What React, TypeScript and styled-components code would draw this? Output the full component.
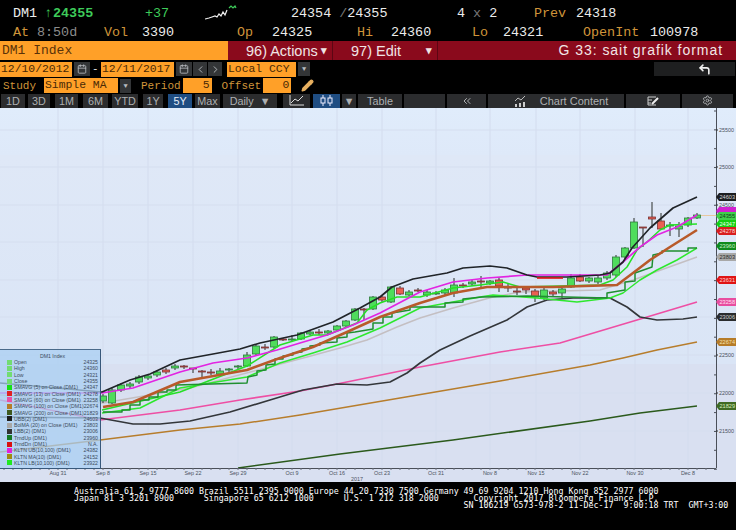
import React from "react";
import styled, { createGlobalStyle } from "styled-components";
import { Calendar, ChevronLeft, ChevronRight, ChevronsLeft, CornerUpLeft, Pencil, Settings } from "lucide-react";

const GlobalStyle = createGlobalStyle`
  html, body {
    margin: 0;
    padding: 0;
    background: #000;
  }
`;

const MONO = `"Liberation Mono", "DejaVu Sans Mono", monospace`;

const StyledRoot = styled.div`
  width: 736px;
  height: 530px;
  overflow: hidden;
  background: #000;
  font-family: ${MONO};
`;

const StyledQuoteRow = styled.div<{ $h: number; $top: number }>`
  display: flex;
  align-items: center;
  box-sizing: border-box;
  height: ${(p) => p.$h}px;
  padding-left: 13px;
  padding-top: ${(p) => p.$top}px;
  font-size: 13.4px;
  white-space: pre;
`;

const StyledField = styled.span<{ $w: number; $color?: string; $bold?: boolean }>`
  display: flex;
  align-items: center;
  flex: 0 0 ${(p) => p.$w}px;
  color: ${(p) => p.$color ?? "#ececec"};
  font-weight: ${(p) => (p.$bold ? 700 : 400)};
`;

const StyledMuted = styled.span`
  color: #777;
`;

const StyledArrow = styled.span`
  font-weight: 400;
  margin-right: 1px;
`;

const StyledCommandBar = styled.div`
  display: flex;
  height: 19px;
  font-size: 13px;
`;

const StyledSecurity = styled.div`
  flex: 0 0 228px;
  padding-left: 2px;
  box-sizing: border-box;
  background: #ffa028;
  color: #5a3208;
  font-size: 13px;
  line-height: 20px;
`;

const StyledMenu = styled.div<{ $w: number }>`
  flex: 0 0 ${(p) => p.$w}px;
  box-sizing: border-box;
  display: flex;
  align-items: center;
  justify-content: space-between;
  padding: 0 5px 0 18px;
  background: #8a0a1c;
  border-right: 1px solid #5c0613;
  color: #f0e4e4;
  font-family: "Liberation Sans", sans-serif;
  font-size: 14.5px;

  b {
    font-size: 11px;
  }
`;

const StyledTitle = styled.div`
  flex: 1;
  background: #8a0a1c;
  color: #f2e6e6;
  font-family: "Liberation Sans", sans-serif;
  font-size: 14px;
  letter-spacing: 0.95px;
  line-height: 19px;
  text-align: right;
  padding-right: 13px;
`;

const StyledFormRow = styled.div<{ $h: number }>`
  display: flex;
  align-items: center;
  gap: 2px;
  height: ${(p) => p.$h}px;
`;

const StyledInput = styled.div<{ $w: number; $right?: boolean; $ml?: number }>`
  flex: 0 0 ${(p) => p.$w}px;
  margin-left: ${(p) => p.$ml ?? 0}px;
  height: 15px;
  line-height: 15px;
  box-sizing: border-box;
  padding: 0 2px 0 1px;
  background: #ffa028;
  color: #4a2a06;
  font-size: 11.4px;
  text-align: ${(p) => (p.$right ? "right" : "left")};
  white-space: nowrap;
`;

const StyledLabel = styled.span<{ $w: number; $ml?: number; $plain?: boolean }>`
  flex: 0 0 ${(p) => p.$w}px;
  margin-left: ${(p) => p.$ml ?? 0}px;
  color: ${(p) => (p.$plain ? "#ddd" : "#d0953a")};
  font-size: 11px;
`;

const StyledIconButton = styled.div<{ $w: number; $ml?: number }>`
  flex: 0 0 ${(p) => p.$w}px;
  margin-left: ${(p) => p.$ml ?? 0}px;
  height: 14px;
  display: flex;
  align-items: center;
  justify-content: center;
  background: #333537;
  color: #b8bcc0;
  font-size: 7px;
`;

const StyledBackButton = styled(StyledIconButton)`
  box-sizing: border-box;
  margin-left: auto;
  margin-right: 1px;
  padding-left: 20px;
  color: #f0f0f0;
  background: #1e1f20;
`;

const StyledPencil = styled.span`
  display: flex;
  margin-left: 8px;
`;

const StyledToolbar = styled.div`
  display: flex;
  align-items: center;
  gap: 2px;
  height: 15px;
`;

const StyledToolButton = styled.div<{ $w: number; $active?: boolean; $ml?: number }>`
  flex: 0 0 ${(p) => p.$w}px;
  margin-left: ${(p) => p.$ml ?? 0}px;
  height: 14px;
  box-sizing: border-box;
  display: flex;
  align-items: center;
  justify-content: center;
  gap: 6px;
  background: ${(p) => (p.$active ? "#1f4d82" : "#2b2c2e")};
  color: ${(p) => (p.$active ? "#e6eef8" : "#aeb0b2")};
  font-family: "Liberation Sans", sans-serif;
  font-size: 10.8px;
`;

const StyledContentButton = styled(StyledToolButton)`
  gap: 14px;
  padding-left: 10px;
  font-size: 11px;
`;

const StyledChart = styled.div`
  position: relative;
  height: 374px;
`;

const StyledChartSvg = styled.svg`
  display: block;
  font-family: "Liberation Sans", sans-serif;
`;

const StyledLegend = styled.div`
  position: absolute;
  left: 0;
  top: 241px;
  width: 101px;
  height: 120px;
  box-sizing: border-box;
  padding: 3px 2px 0 2px;
  background: rgba(168, 206, 242, 0.74);
  border-top: 1px solid #4a6a8a;
  border-right: 1px solid #38587a;
  border-bottom: 1px solid #38587a;
  font-family: "Liberation Sans", sans-serif;
  font-size: 5.2px;
  color: #3d4c5c;
`;

const StyledLegendTitle = styled.div`
  height: 6px;
  line-height: 6px;
  text-align: center;
  padding-left: 5px;
`;

const StyledLegendRow = styled.div`
  display: flex;
  align-items: center;
  height: 6.3px;
  padding-left: 5px;
  white-space: nowrap;
`;

const StyledSwatch = styled.i<{ $color: string }>`
  flex: 0 0 5px;
  height: 5px;
  margin-right: 2px;
  background: ${(p) => p.$color};
`;

const StyledLegendValue = styled.span`
  margin-left: auto;
`;

const StyledFooter = styled.div`
  height: 48px;
  padding: 6px 0 0 74px;
  box-sizing: border-box;
  color: #fff;
  font-family: "DejaVu Sans Mono", monospace;
  font-size: 8.3px;
  line-height: 6.9px;
  white-space: pre;
`;

const Caret: React.FC = () => <span>▼</span>;

// [y open, y close, y high, y low] in page pixels, one candle every 9px from x=103
const CANDLES: Array<[number, number, number, number]> = [
  [401, 396, 394, 403], [403, 390, 388, 404], [390, 385, 383, 392], [386, 384, 382, 388],
  [382, 377, 375, 384], [378, 376, 374, 380], [375, 372, 370, 377], [370, 372, 368, 374],
  [368, 366, 364, 370], [366, 367, 365, 369], [368, 369, 368, 373], [371, 372, 370, 379],
  [372, 372.5, 369, 375], [374, 371, 368, 376], [370, 369, 368, 373], [367, 366, 365, 369],
  [366, 355, 352, 367], [354, 346, 345, 355], [347, 347.5, 344, 350], [347, 337, 336, 348],
  [339, 340, 338, 341], [340, 339, 335, 342], [339, 333, 332, 340], [334, 332, 331, 335],
  [332, 332.5, 329, 335], [333, 331, 330, 335], [330, 326, 325, 331], [326, 321, 320, 327],
  [320, 309, 308, 321], [309, 309.5, 308, 320], [309, 297, 296, 310], [297, 300, 296, 302],
  [302, 287, 286, 303], [288, 294, 286, 295], [295, 292, 290, 296], [290, 290.5, 288, 292],
  [295, 292, 290, 297], [293.5, 293, 291, 295], [293, 290, 288, 295], [293, 285, 278, 297],
  [285, 285.5, 283, 288], [284, 282, 280, 286], [281, 282, 276, 287], [283, 281, 280, 285],
  [280, 286, 278, 292], [287, 288, 284, 292], [291, 292, 288, 295], [288, 290, 286, 294],
  [291, 297, 289, 302], [298, 290, 288, 300], [292, 294, 290, 296], [293, 289, 288, 298],
  [287, 278, 274, 288], [277, 281, 274, 282], [281, 278, 277, 283], [282, 278, 276, 284],
  [278, 273, 271, 280], [275, 257, 255, 277], [257, 248, 247, 259], [248, 222, 218, 249],
  [227, 227.5, 227, 247], [217, 219, 202, 228], [221, 229, 213, 230], [226, 225, 222, 236],
  [229, 226, 222, 237], [225, 218, 217, 227], [218, 215, 213, 219],
];

type Series = { color: string; width: number; pts: Array<[number, number]> };

const SERIES: Array<Series> = [
  {
    color: "#c4bfc2", width: 1.4,
    pts: [[0, 395], [103, 403], [190, 388], [307, 357], [340, 348], [367, 340], [397, 327], [420, 318], [453, 308], [493, 297], [520, 292], [600, 290], [633, 280], [697, 257]],
  },
  {
    color: "#2b5a1c", width: 1.5,
    pts: [[238, 468], [340, 454], [453, 440], [590, 421], [640, 413], [697, 406]],
  },
  {
    color: "#b77d2c", width: 1.5,
    pts: [[0, 452], [100, 440], [180, 430], [240, 424], [300, 415], [400, 398], [500, 381], [590, 365], [623, 358], [657, 350], [697, 342]],
  },
  {
    color: "#ee4fa4", width: 1.6,
    pts: [[0, 400], [100, 420], [180, 410], [240, 400], [300, 391], [337, 384], [420, 367], [500, 352], [560, 343], [637, 320], [697, 302]],
  },
  {
    color: "#33363a", width: 1.6,
    pts: [[0, 417], [100, 418], [133, 424], [160, 424], [190, 421], [230, 412], [270, 400], [303, 390], [337, 384], [367, 385], [390, 382], [407, 373], [420, 363], [440, 350], [470, 336], [507, 320], [527, 307], [547, 300], [573, 298], [610, 298], [627, 307], [640, 317], [657, 320], [683, 319], [697, 317]],
  },
  {
    color: "#2ee82e", width: 1.5,
    pts: [[102, 413], [140, 408], [180, 388], [247, 377], [280, 363], [313, 353], [347, 342], [380, 328], [420, 308], [480, 297], [493, 295], [537, 298], [577, 302], [610, 298], [623, 293], [640, 280], [657, 270], [677, 260], [697, 248]],
  },
  {
    color: "#26e026", width: 1.5,
    pts: [[102, 410], [180, 392], [247, 366], [280, 345], [313, 335], [327, 335], [357, 323], [367, 310], [380, 303], [397, 297], [420, 297], [453, 288], [480, 285], [503, 282], [520, 287], [600, 285], [613, 280], [627, 267], [637, 250], [647, 242], [660, 230], [670, 225], [697, 224]],
  },
  {
    color: "#1f8f30", width: 1.5,
    pts: [[103, 412], [122, 412], [122, 410], [130, 410], [130, 405], [140, 405], [140, 400], [149, 400], [149, 397], [158, 397], [158, 392], [167, 392], [167, 390], [176, 390], [176, 385], [247, 383], [248, 377], [257, 375], [257, 371], [266, 370], [266, 365], [275, 364], [275, 359], [283, 359], [283, 356], [293, 355], [293, 353], [302, 352], [302, 349], [310, 348], [310, 346], [320, 345], [320, 343], [337, 342], [337, 338], [347, 337], [347, 333], [355, 332], [373, 329], [373, 323], [383, 323], [383, 317], [392, 317], [392, 313], [410, 310], [410, 307], [445, 307], [445, 303], [463, 302], [463, 299], [482, 297], [527, 296], [607, 298], [607, 293], [625, 290], [625, 282], [635, 281], [635, 273], [652, 267], [653, 255], [662, 253], [662, 251], [688, 251], [688, 248], [697, 248]],
  },
  {
    color: "#b85a2a", width: 2.6,
    pts: [[103, 407], [133, 402], [180, 382], [247, 370], [280, 358], [313, 347], [347, 332], [380, 317], [420, 303], [453, 293], [487, 287], [553, 287], [617, 285], [633, 273], [650, 260], [670, 247], [697, 230]],
  },
  {
    color: "#e224e2", width: 1.7,
    pts: [[0, 393], [102, 393], [133, 388], [180, 372], [213, 363], [247, 358], [277, 350], [300, 343], [327, 335], [353, 325], [380, 313], [420, 292], [453, 282], [487, 278], [527, 275], [607, 275], [623, 262], [640, 247], [657, 235], [677, 227], [697, 215]],
  },
  {
    color: "#202428", width: 1.7,
    pts: [[0, 383], [102, 392], [130, 380], [150, 374], [180, 360], [213, 354], [240, 349], [260, 343], [297, 335], [333, 322], [360, 308], [380, 297], [392, 287], [413, 279], [447, 273], [463, 268], [490, 266], [507, 268], [527, 275], [537, 277], [567, 277], [600, 275], [610, 273], [623, 262], [632, 248], [650, 228], [673, 208], [697, 197]],
  },
  {
    color: "#e01010", width: 1.6,
    pts: [[537, 278], [563, 278]],
  },
];

const TAGS: Array<{ y: number; value: string; bg: string; fg: string }> = [
  { y: 197, value: "24603", bg: "#1c1e20", fg: "#d8d8d8" },
  { y: 211, value: "", bg: "#d020d0", fg: "#fff" },
  { y: 216, value: "24355", bg: "#3fcf4a", fg: "#10401a" },
  { y: 224, value: "24347", bg: "#12d012", fg: "#e8ffe8" },
  { y: 231, value: "24278", bg: "#d81f1f", fg: "#ffd8d8" },
  { y: 246, value: "23960", bg: "#0f8a1c", fg: "#c8f0c8" },
  { y: 257, value: "23803", bg: "#a8a8a8", fg: "#2a2a2a" },
  { y: 280, value: "23631", bg: "#e01414", fg: "#ffd0d0" },
  { y: 302, value: "23258", bg: "#e84ea0", fg: "#ffe0f0" },
  { y: 317, value: "23006", bg: "#2a2c2e", fg: "#d0d0d0" },
  { y: 342, value: "22674", bg: "#b67c28", fg: "#f4e0b0" },
  { y: 406, value: "21829", bg: "#3f6a22", fg: "#d8f0c0" },
];

const Y_TICKS: Array<[number, string]> = [
  [130, "25500"], [167, "25000"], [205, "24500"], [355, "22500"], [393, "22000"], [431, "21500"],
];

const X_LABELS: Array<[number, string]> = [
  [58, "Aug 31"], [103, "Sep 8"], [148, "Sep 15"], [193, "Sep 22"], [238, "Sep 29"], [292, "Oct 9"],
  [337, "Oct 16"], [382, "Oct 23"], [436, "Oct 31"], [490, "Nov 8"], [536, "Nov 15"], [580, "Nov 22"],
  [635, "Nov 30"], [688, "Dec 8"],
];

const LEGEND: Array<[string, string, string]> = [
  ["#72dc72", "Open", "24325"],
  ["#72dc72", "High", "24360"],
  ["#72dc72", "Low", "24321"],
  ["#72dc72", "Close", "24355"],
  ["#16e016", "SMAVG (5) on Close (DM1)", "24347"],
  ["#e02020", "SMAVG (13) on Close (DM1)", "24278"],
  ["#e850a8", "SMAVG (60) on Close (DM1)", "23258"],
  ["#b67c28", "SMAVG (100) on Close (DM1)", "22674"],
  ["#3f5a20", "SMAVG (200) on Close (DM1)", "21829"],
  ["#1c1c1c", "UBB(2) (DM1)", "24603"],
  ["#a8a8a8", "BolMA (20) on Close (DM1)", "23803"],
  ["#333", "LBB(2) (DM1)", "23006"],
  ["#157a25", "TrndUp (DM1)", "23960"],
  ["#d81010", "TrndDn (DM1)", "N.A."],
  ["#e020e0", "KLTN UB(10,100) (DM1)", "24382"],
  ["#a08a10", "KLTN MA(10) (DM1)", "24152"],
  ["#20e820", "KLTN LB(10,100) (DM1)", "23922"],
];

const Sparkline: React.FC = () => (
  <svg width="36" height="16" viewBox="0 0 36 16">
    <polyline points="0,14 4,13 7,12 10,11 12,12 14,9 16,11 18,7 20,10 22,5" fill="none" stroke="#f0f0f0" strokeWidth="1.2" />
    <polyline points="24,3 26,1 28,3 30,1 31,3" fill="none" stroke="#3ecb5a" strokeWidth="1.2" />
  </svg>
);

const LineIcon: React.FC = () => (
  <svg width="15" height="11" viewBox="0 0 15 11">
    <path d="M1 0V10H15" fill="none" stroke="#ddd" strokeWidth="1" />
    <path d="M2 8L6 4L9 6L14 1" fill="none" stroke="#ddd" strokeWidth="1" />
  </svg>
);

const CandleIcon: React.FC = () => (
  <svg width="15" height="11" viewBox="0 0 15 11">
    <path d="M4 0V11M11 0V11" stroke="#eef" strokeWidth="1" />
    <rect x="2" y="3" width="4" height="5" fill="#1f4d82" stroke="#eef" />
    <rect x="9" y="3" width="4" height="5" fill="#1f4d82" stroke="#eef" />
  </svg>
);

const ContentIcon: React.FC = () => (
  <svg width="12" height="12" viewBox="0 0 12 12">
    <path d="M1 6L4 3L7 5L11 1" fill="none" stroke="#bbb" strokeWidth="1" />
    <path d="M1 9h2v3H1zM5 8h2v4H5zM9 7h2v5H9z" fill="#ccc" />
  </svg>
);

const EditIcon: React.FC = () => (
  <svg width="13" height="10" viewBox="0 0 13 10">
    <path d="M1 1H9M1 4H5M1 7H4M1 1V9H9" fill="none" stroke="#ccc" strokeWidth="1" />
    <path d="M5 8L11 2" stroke="#eee" strokeWidth="2" />
  </svg>
);

const toPoints = (pts: Array<[number, number]>) => pts.map(([x, y]) => `${x},${y}`).join(" ");

const PriceChart: React.FC = () => (
  <StyledChartSvg width="736" height="374" viewBox="0 108 736 374">
    <defs>
      <linearGradient id="top" x1="0" y1="0" x2="0" y2="1">
        <stop offset="0" stopColor="#e0ecfb" />
        <stop offset="1" stopColor="#dee9f9" />
      </linearGradient>
      <linearGradient id="mid" x1="0" y1="0" x2="0" y2="1">
        <stop offset="0" stopColor="#dfe8f7" />
        <stop offset="1" stopColor="#dae5f6" />
      </linearGradient>
    </defs>
    <rect x="0" y="108" width="736" height="47" fill="url(#top)" />
    <rect x="0" y="155" width="736" height="209" fill="url(#mid)" />
    <rect x="0" y="364" width="736" height="118" fill="#d9e0f1" />

    {X_LABELS.map(([x, label]) => (
      <line key={label} x1={x} x2={x} y1="108" y2="468" stroke="#d3dcee" strokeWidth="1" />
    ))}
    {[92, 130, 167, 205, 242, 280, 317, 355, 393, 431].map((y) => (
      <line key={y} x1="0" x2="716" y1={y} y2={y} stroke="#d5deef" strokeWidth="1" />
    ))}

    {SERIES.slice(0, 5).map((s, i) => (
      <polyline key={i} points={toPoints(s.pts)} fill="none" stroke={s.color} strokeWidth={s.width} strokeLinejoin="round" />
    ))}
    <line x1="697" x2="716" y1="215.5" y2="215.5" stroke="#e8c8a0" strokeWidth="1" />

    {CANDLES.map(([open, close, high, low], i) => {
      const x = 103 + i * 9;
      const up = close <= open;
      const top = Math.min(open, close);
      const h = Math.max(Math.abs(open - close), 1);
      return (
        <g key={i}>
          <line x1={x} x2={x} y1={high} y2={low} stroke="#2a2e2a" strokeWidth="1" />
          <rect
            x={x - 3.5}
            y={top}
            width="7"
            height={h}
            fill={up ? "#4fdc5c" : "#ea5f52"}
            stroke={up ? "#2f7a3c" : "#7a3434"}
            strokeWidth="0.8"
          />
        </g>
      );
    })}

    {SERIES.slice(5).map((s, i) => (
      <polyline key={i} points={toPoints(s.pts)} fill="none" stroke={s.color} strokeWidth={s.width} strokeLinejoin="round" />
    ))}

    <line x1="0" x2="716" y1="468.5" y2="468.5" stroke="#4a4f58" strokeWidth="1" />
    <line x1="716.5" x2="716.5" y1="108" y2="468" stroke="#4a4f58" strokeWidth="1" />
    {Array.from({ length: 80 }, (_, i) => (
      <line key={i} x1={4 + i * 9} x2={4 + i * 9} y1="468" y2="470" stroke="#6a707c" strokeWidth="1" />
    ))}
    {Array.from({ length: 20 }, (_, i) => (
      <line key={i} x1="714" x2="717" y1={111 + i * 18.85} y2={111 + i * 18.85} stroke="#4a4f58" strokeWidth="1" />
    ))}

    {Y_TICKS.map(([y, label]) => (
      <g key={label}>
        <line x1="716" x2="718" y1={y} y2={y} stroke="#333" strokeWidth="1" />
        <text x="719" y={y + 2} fontSize="5.4" fill="#4a5260">{label}</text>
      </g>
    ))}
    {X_LABELS.map(([x, label]) => (
      <text key={label} x={x} y="475" fontSize="5.4" fill="#4a5260" textAnchor="middle">{label}</text>
    ))}
    <text x="357" y="480.5" fontSize="5.4" fill="#4a5260" textAnchor="middle">2017</text>

    {TAGS.map((t) => (
      <g key={t.y}>
        <polygon
          points={`716,${t.y} 719,${t.y - 4} 736,${t.y - 4} 736,${t.y + 4} 719,${t.y + 4}`}
          fill={t.bg}
        />
        <text x="719.5" y={t.y + 2} fontSize="5.6" fill={t.fg}>{t.value}</text>
      </g>
    ))}
  </StyledChartSvg>
);

export default function App() {
  return (
    <StyledRoot>
      <GlobalStyle />
      <StyledQuoteRow $h={22} $top={4}>
        <StyledField $w={31}>DM1</StyledField>
        <StyledField $w={101} $color="#3ecb5a" $bold>
          <StyledArrow>↑</StyledArrow>24355
        </StyledField>
        <StyledField $w={60} $color="#3ecb5a">+37</StyledField>
        <StyledField $w={86}><Sparkline /></StyledField>
        <StyledField $w={166}>24354 <StyledMuted>/</StyledMuted>24355</StyledField>
        <StyledField $w={77}>4<StyledMuted> x </StyledMuted>2</StyledField>
        <StyledField $w={42} $color="#d0953a">Prev</StyledField>
        <StyledField $w={60}>24318</StyledField>
      </StyledQuoteRow>
      <StyledQuoteRow $h={19} $top={1}>
        <StyledField $w={24} $color="#d0953a">At</StyledField>
        <StyledField $w={67} $color="#8c8c8c">8:50d</StyledField>
        <StyledField $w={38} $color="#d0953a">Vol</StyledField>
        <StyledField $w={95}>3390</StyledField>
        <StyledField $w={35} $color="#d0953a">Op</StyledField>
        <StyledField $w={85}>24325</StyledField>
        <StyledField $w={34} $color="#d0953a">Hi</StyledField>
        <StyledField $w={81}>24360</StyledField>
        <StyledField $w={31} $color="#d0953a">Lo</StyledField>
        <StyledField $w={80}>24321</StyledField>
        <StyledField $w={67} $color="#d0953a">OpenInt</StyledField>
        <StyledField $w={50}>100978</StyledField>
      </StyledQuoteRow>

      <StyledCommandBar>
        <StyledSecurity>DM1 Index</StyledSecurity>
        <StyledMenu $w={105}>96) Actions <b>▾</b></StyledMenu>
        <StyledMenu $w={105}>97) Edit <b>▾</b></StyledMenu>
        <StyledTitle>G 33: sait grafik format</StyledTitle>
      </StyledCommandBar>

      <StyledFormRow $h={18}>
        <StyledInput $w={72}>12/10/2012</StyledInput>
        <StyledIconButton $w={16}><Calendar size={10} /></StyledIconButton>
        <StyledLabel $w={7} $plain>-</StyledLabel>
        <StyledInput $w={73}>12/11/2017</StyledInput>
        <StyledIconButton $w={16}><Calendar size={10} /></StyledIconButton>
        <StyledIconButton $w={14} $ml={-1}><ChevronLeft size={11} /></StyledIconButton>
        <StyledIconButton $w={14} $ml={-1}><ChevronRight size={11} /></StyledIconButton>
        <StyledInput $w={69} $ml={3}>Local CCY</StyledInput>
        <StyledIconButton $w={12}><Caret /></StyledIconButton>
        <StyledBackButton $w={81}><CornerUpLeft size={13} strokeWidth={3} /></StyledBackButton>
      </StyledFormRow>

      <StyledFormRow $h={15}>
        <StyledLabel $w={39} $ml={3}>Study</StyledLabel>
        <StyledInput $w={74}>Simple MA</StyledInput>
        <StyledIconButton $w={11}><Caret /></StyledIconButton>
        <StyledLabel $w={39} $ml={8}>Period</StyledLabel>
        <StyledInput $w={29} $right>5</StyledInput>
        <StyledLabel $w={38} $ml={8}>Offset</StyledLabel>
        <StyledInput $w={28} $right>0</StyledInput>
        <StyledPencil><Pencil size={13} color="#e8b060" fill="#e8b060" /></StyledPencil>
      </StyledFormRow>

      <StyledToolbar>
        <StyledToolButton $w={24} $ml={1}>1D</StyledToolButton>
        <StyledToolButton $w={22} $ml={1}>3D</StyledToolButton>
        <StyledToolButton $w={23} $ml={3}>1M</StyledToolButton>
        <StyledToolButton $w={25} $ml={3}>6M</StyledToolButton>
        <StyledToolButton $w={26} $ml={2}>YTD</StyledToolButton>
        <StyledToolButton $w={20} $ml={3}>1Y</StyledToolButton>
        <StyledToolButton $w={24} $ml={3} $active>5Y</StyledToolButton>
        <StyledToolButton $w={25} $ml={1}>Max</StyledToolButton>
        <StyledToolButton $w={54} $ml={1}>Daily <Caret /></StyledToolButton>
        <StyledToolButton $w={27} $ml={4}><LineIcon /></StyledToolButton>
        <StyledToolButton $w={27} $ml={1} $active><CandleIcon /></StyledToolButton>
        <StyledToolButton $w={14}><Caret /></StyledToolButton>
        <StyledToolButton $w={44}>Table</StyledToolButton>
        <StyledToolButton $w={41}></StyledToolButton>
        <StyledToolButton $w={39}><ChevronsLeft size={12} /></StyledToolButton>
        <StyledContentButton $w={136}><ContentIcon /> Chart Content</StyledContentButton>
        <StyledToolButton $w={54}><EditIcon /></StyledToolButton>
        <StyledToolButton $w={51}><Settings size={11} /></StyledToolButton>
      </StyledToolbar>

      <StyledChart>
        <PriceChart />
        <StyledLegend>
          <StyledLegendTitle>DM1 Index</StyledLegendTitle>
          {LEGEND.map(([color, name, value]) => (
            <StyledLegendRow key={name}>
              <StyledSwatch $color={color} />
              {name}
              <StyledLegendValue>{value}</StyledLegendValue>
            </StyledLegendRow>
          ))}
        </StyledLegend>
      </StyledChart>

      <StyledFooter>
        {"Australia 61 2 9777 8600 Brazil 5511 2395 9000 Europe 44 20 7330 7500 Germany 49 69 9204 1210 Hong Kong 852 2977 6000\n"}
        {"Japan 81 3 3201 8900      Singapore 65 6212 1000      U.S. 1 212 318 2000       Copyright 2017 Bloomberg Finance L.P.\n"}
        {"                                                                              SN 106219 G573-978-2 11-Dec-17  9:00:18 TRT  GMT+3:00"}
      </StyledFooter>
    </StyledRoot>
  );
}
